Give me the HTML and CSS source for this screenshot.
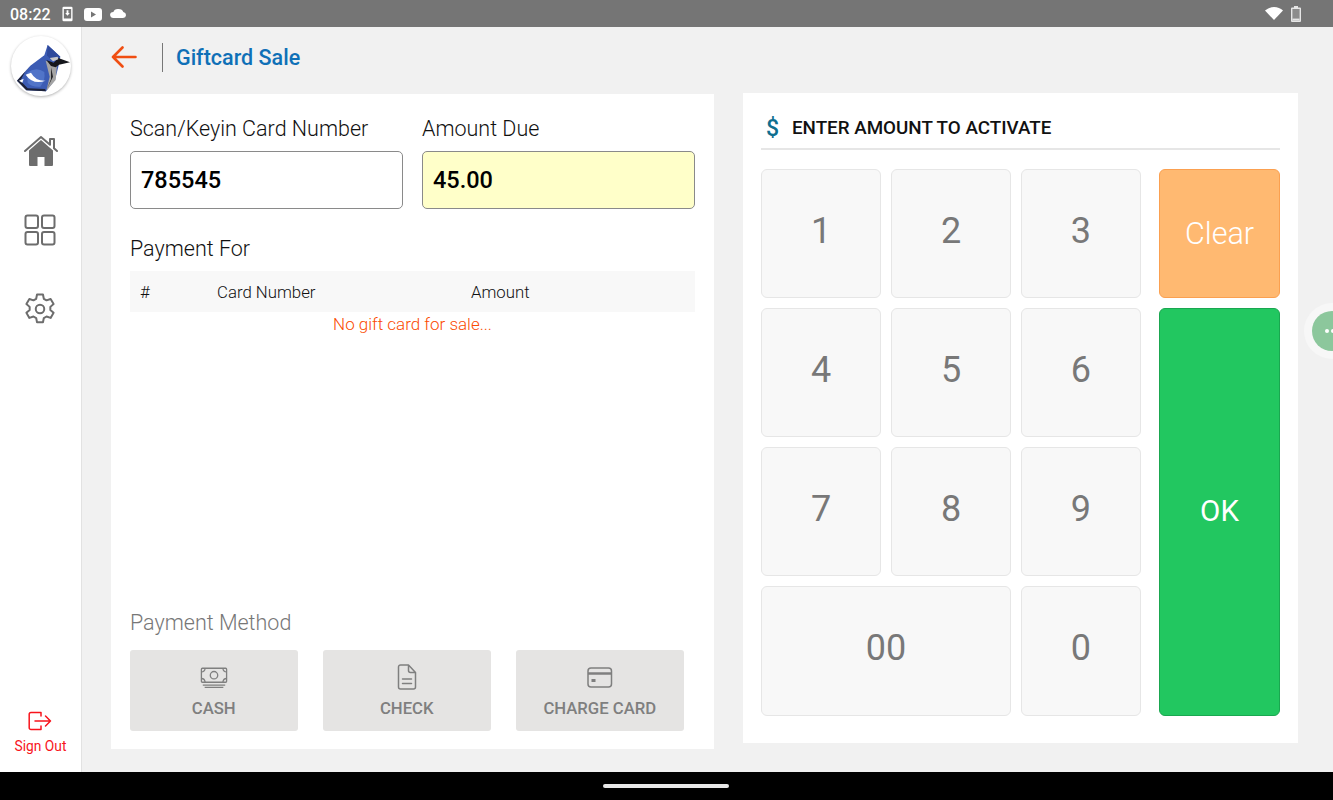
FILE: index.html
```html
<!DOCTYPE html>
<html lang="en">
<head>
<meta charset="utf-8">
<title>Giftcard Sale</title>
<link rel="stylesheet" href="styles.css">
</head>
<body>
<div class="statusbar">
  <span class="time">08:22</span>
  <svg class="st-ic" width="11" height="16" viewBox="0 0 12 16"><path fill-rule="evenodd" d="M2 0h8a1.500 1.500 0 0 1 1.500 1.500v13A1.500 1.500 0 0 1 10 16H2a1.500 1.500 0 0 1-1.500-1.500v-13A1.500 1.500 0 0 1 2 0zM2 2.500v10.500h8V2.500zM5 4h2v3h1.500L6 10 3.500 7H5z" fill="#fff"/></svg>
  <svg class="st-ic yt" width="18" height="13" viewBox="0 0 18 13"><path fill-rule="evenodd" d="M3 0h12a3 3 0 0 1 3 3v7a3 3 0 0 1-3 3H3a3 3 0 0 1-3-3V3a3 3 0 0 1 3-3zM7 3.500v6l5-3z" fill="#fff"/></svg>
  <svg class="st-ic cloud" width="17" height="9" viewBox="0 0 17 11" preserveAspectRatio="none"><path d="M4 11a3.600 3.600 0 0 1-.6-7.200A5 5 0 0 1 8.500 0a5 5 0 0 1 4.800 3.800A3.700 3.700 0 0 1 13 11z" fill="#fff"/></svg>
  <span class="st-space"></span>
  <svg class="st-ic wifi" width="18" height="13" viewBox="0 0 18 13"><path d="M9 13 0 3.500C2.500 1.300 5.500 0 9 0s6.500 1.300 9 3.500z" fill="#fff"/></svg>
  <svg class="st-ic batt" width="10" height="16" viewBox="0 0 10 16"><path d="M3 0h4v1.500h2a1 1 0 0 1 1 1V15a1 1 0 0 1-1 1H1a1 1 0 0 1-1-1V2.500a1 1 0 0 1 1-1h2z" fill="#e6e6e6"/><rect x="1.400" y="3" width="7.200" height="11.600" fill="#8c8c8c"/><rect x="1.400" y="12.600" width="7.200" height="2" fill="#e6e6e6"/></svg>
</div>

<div class="app">
  <nav class="sidebar">
    <div class="logo">
      <svg width="60" height="60" viewBox="30 18 180 180">
        <path d="M48 152 88 107 130 76 140 45 178 80 172 110 162 150 135 184 76 181z" fill="#3c5cb4"/>
        <path d="M48 152 88 107 72 126 58 152 80 175 132 177 135 184 76 181z" fill="#1d2238"/>
        <path d="M140 45 178 80 150 90 138 76z" fill="#2f4a9c"/>
        <path d="M78 128Q105 108 130 126 134 150 118 170 92 172 80 158z" fill="#5174c8"/>
        <path d="M74 134Q96 166 134 152 104 154 90 128z" fill="#fff"/>
        <path d="M54 152 68 146 64 158z" fill="#fff"/>
        <path d="M134 92 152 98 168 106 164 150 136 182 146 140z" fill="#a4a4a4"/>
        <path d="M136 90 158 98 172 84 207 97 174 104 164 112 150 108z" fill="#15161c"/>
        <path d="M146 84 170 80 172 88 156 94z" fill="#c8c8c8"/>
        <path d="M150 112 156 140 138 176 150 148z" fill="#26262a"/>
      </svg>
    </div>
    <a class="nav-ic home"><svg width="34" height="32" viewBox="0 0 34 32"><path d="M5 15.500 17 5l12 10.500V30a1 1 0 0 1-1 1h-7.500v-9h-7v9H6a1 1 0 0 1-1-1z" fill="#6d6d6d"/><path d="M1 16 17 2l9 7.800V4h4v9.300l3 2.700" fill="none" stroke="#6d6d6d" stroke-width="2" stroke-linejoin="round" stroke-linecap="round"/></svg></a>
    <a class="nav-ic grid-ic"><svg width="32" height="32" viewBox="0 0 32 32" fill="none" stroke="#6d6d6d" stroke-width="2"><rect x="1.500" y="1.500" width="12.500" height="12.500" rx="2"/><rect x="18" y="1.500" width="12.500" height="12.500" rx="2"/><rect x="1.500" y="18" width="12.500" height="12.500" rx="2"/><rect x="18" y="18" width="12.500" height="12.500" rx="2"/></svg></a>
    <a class="nav-ic gear"><svg width="34" height="34" viewBox="0 0 24 24" fill="none" stroke="#6d6d6d" stroke-width="1.400" stroke-linejoin="round"><circle cx="12" cy="12" r="3"/><path d="M9.900 1.800h4.200l.6 3 1.900 1.100 2.900-1 2.100 3.600-2.300 2 .0 2.200 2.300 2-2.100 3.600-2.900-1-1.900 1.100-.6 3H9.900l-.6-3-1.900-1.100-2.900 1-2.100-3.600 2.300-2v-2.200l-2.300-2 2.100-3.600 2.900 1 1.900-1.100z"/></svg></a>
    <a class="signout">
      <svg width="24" height="20" viewBox="0 0 24 20" fill="none" stroke="#f8141c" stroke-width="1.500" stroke-linecap="round" stroke-linejoin="round"><path d="M13 5V1.500H3A1.800 1.800 0 0 0 1.200 3.300v13.400A1.800 1.800 0 0 0 3 18.500h10V15"/><path d="M7 10h15.500M17.500 5l5 5-5 5"/></svg>
      <span>Sign Out</span>
    </a>
  </nav>

  <main class="main">
    <header class="topbar">
      <svg class="back" width="26" height="22" viewBox="0 0 26 22" fill="none" stroke="#f04e12" stroke-width="2.600" stroke-linecap="round" stroke-linejoin="round"><path d="M24.500 11H2M11.500 1.500 2 11l9.500 9.500"/></svg>
      <span class="divider"></span>
      <h1 class="title">Giftcard Sale</h1>
    </header>

    <div class="cards">
      <section class="card left">
        <div class="fields">
          <label class="field">
            <span class="lbl">Scan/Keyin Card Number</span>
            <span class="input">785545</span>
          </label>
          <label class="field">
            <span class="lbl">Amount Due</span>
            <span class="input due">45.00</span>
          </label>
        </div>
        <div class="lbl pay-for">Payment For</div>
        <div class="thead">
          <span class="c-num">#</span>
          <span class="c-card">Card Number</span>
          <span class="c-amt">Amount</span>
        </div>
        <div class="empty">No gift card for sale...</div>
        <div class="lbl method">Payment Method</div>
        <div class="methods">
          <button class="mbtn">
            <svg width="28" height="23" viewBox="0 0 30 24" fill="none" stroke="#7f7f7f" stroke-width="1.400"><rect x="1.500" y="1" width="27" height="15" rx="1"/><circle cx="15" cy="8.500" r="4"/><path d="M1.500 5Q5 5 5.500 1M28.500 5Q25 5 24.500 1M1.500 12Q5 12 5.500 16M28.500 12Q25 12 24.500 16M3 19h24M5 21.500h20" /></svg>
            <span>CASH</span>
          </button>
          <button class="mbtn">
            <svg width="20" height="26" viewBox="0 0 20 26" fill="none" stroke="#7f7f7f" stroke-width="1.500" stroke-linejoin="round" stroke-linecap="round"><path d="M11.500 1H3.500A2 2 0 0 0 1.500 3v20a2 2 0 0 0 2 2h13a2 2 0 0 0 2-2V8.500zM11.500 1v5.500a2 2 0 0 0 2 2h5M5.500 15h9M5.500 19.500h9"/></svg>
            <span>CHECK</span>
          </button>
          <button class="mbtn">
            <svg width="26" height="24" viewBox="0 0 26 24" fill="none" stroke="#7f7f7f" stroke-width="1.500"><rect x="1" y="2" width="23.500" height="19" rx="3"/><path d="M1 7.500h23.500" stroke-width="2.500"/><rect x="4.500" y="13" width="4" height="3" fill="#7f7f7f" stroke="none"/></svg>
            <span>CHARGE CARD</span>
          </button>
        </div>
      </section>

      <section class="card right">
        <div class="pad-head">
          <span class="dollar">$</span>
          <span class="pad-title">ENTER AMOUNT TO ACTIVATE</span>
        </div>
        <div class="pad">
          <button class="key">1</button>
          <button class="key">2</button>
          <button class="key">3</button>
          <button class="key clear">Clear</button>
          <button class="key">4</button>
          <button class="key">5</button>
          <button class="key">6</button>
          <button class="key ok">OK</button>
          <button class="key">7</button>
          <button class="key">8</button>
          <button class="key">9</button>
          <button class="key wide">00</button>
          <button class="key">0</button>
        </div>
      </section>
    </div>
  </main>
</div>

<div class="navbar"><span class="handle"></span></div>
<div class="bubble"><span class="dots"></span></div>
</body>
</html>
```

FILE: styles.css
```css
* { box-sizing: border-box; }
html, body { margin: 0; height: 800px; overflow: hidden; }
body {
  display: flex;
  flex-direction: column;
  font-family: Roboto, "Liberation Sans", sans-serif;
  background: #f1f1f1;
  color: #111;
}
.statusbar {
  height: 27px;
  background: #757575;
  display: flex;
  align-items: center;
  padding: 1px 32px 0 10px;
  color: #fff;
  flex: none;
}
.time { font-size: 16px; font-weight: 500; margin-right: 11px; }
.st-ic { display: block; flex: none; }
.yt { margin-left: 11px; }
.cloud { margin-left: 8px; margin-top: -1px; }
.st-space { flex: 1; }
.wifi { margin-top: -1px; }
.batt { margin-left: 8px; }

.app { flex: 1; display: flex; min-height: 0; }

.sidebar {
  width: 82px;
  flex: none;
  background: #fff;
  border-right: 1px solid #e2e2e2;
  display: flex;
  flex-direction: column;
  align-items: center;
  padding-top: 9px;
}
.logo {
  width: 60px;
  height: 60px;
  border-radius: 50%;
  background: #fff;
  box-shadow: 0 1px 3px rgba(0,0,0,.3);
  margin-bottom: 39px;
}
.logo svg { display: block; }
.nav-ic { display: block; height: 32px; margin-bottom: 47px; }
.nav-ic svg { display: block; }
.grid-ic, .gear { margin-right: 1px; }
.gear { margin-top: -1px; }
.signout {
  margin-top: auto;
  margin-bottom: 18px;
  display: flex;
  flex-direction: column;
  align-items: center;
  color: #f8141c;
  font-size: 13.800px;
  gap: 7px;
}

.main { flex: 1; padding-left: 29px; display: flex; flex-direction: column; min-width: 0; }
.topbar { height: 67px; flex: none; display: flex; align-items: center; padding-bottom: 7px; }
.back { display: block; margin-right: 25px; }
.divider { width: 1px; height: 29px; background: #777; margin-right: 13px; }
.title { margin: 0; font-size: 21.500px; font-weight: 500; color: #0f70b7; padding-top: 1px; }

.cards { display: flex; align-items: flex-start; gap: 29px; }
.card { background: #fff; }
.left {
  width: 603px;
  height: 655px;
  padding: 19px 19px 18px;
  display: flex;
  flex-direction: column;
}
.fields { display: flex; gap: 19px; }
.field { width: 273px; display: block; }
.lbl { display: block; height: 30px; padding-top: 1px; font-size: 21.500px; font-weight: 300; line-height: 30px; color: #111; }
.input {
  display: flex;
  align-items: center;
  height: 58px;
  margin-top: 8px;
  padding-left: 10px;
  border: 1px solid #8a8a8a;
  border-radius: 5px;
  font-size: 23.500px;
  font-weight: 500;
  color: #000;
  background: #fff;
}
.due { background: #ffffc9; }
.pay-for { margin-top: 24px; flex: none; }
.thead {
  height: 41px;
  margin-top: 8px;
  padding-top: 1px;
  background: #f8f8f8;
  display: flex;
  align-items: center;
  font-size: 16.800px;
  font-weight: 300;
}
.c-num { width: 87px; padding-left: 10px; }
.c-card { width: 254px; }
.empty {
  margin-top: 2px;
  text-align: center;
  font-size: 17px;
  font-weight: 300;
  line-height: 20px;
  color: #fb4c02;
}
.method { margin-top: auto; color: #777; flex: none; }
.methods { display: flex; gap: 25.500px; margin-top: 13px; }
.mbtn {
  width: 167.500px;
  height: 81px;
  border: 0;
  border-radius: 3px;
  background: #e5e4e3;
  padding: 0;
  font-family: inherit;
  color: #7f7f7f;
  font-size: 16.700px;
  font-weight: 500;
  display: flex;
  flex-direction: column;
  align-items: center;
  justify-content: flex-end;
  gap: 9px;
  padding-bottom: 13px;
}
.mbtn svg { display: block; }

.right { width: 555px; height: 650px; padding: 18px; margin-top: -1px; }
.pad-head {
  height: 39px;
  border-bottom: 2px solid #e6e6e6;
  display: flex;
  align-items: center;
  padding: 0 0 3px 5px;
}
.dollar { color: #0f6f8f; font-size: 23px; font-weight: 500; width: 26px; }
.pad-title { font-size: 18.800px; font-weight: 500; color: #111; }
.pad {
  margin-top: 19px;
  display: grid;
  grid-template-columns: 120px 120px 119.500px 121px;
  grid-template-rows: repeat(4, 129.300px);
  column-gap: 10px;
  row-gap: 9.800px;
}
.key {
  border: 1px solid #e6e6e6;
  border-radius: 6px;
  background: #f8f8f8;
  color: #787878;
  font-family: inherit;
  font-size: 36px;
  font-weight: 400;
  padding: 0 0 5px;
}
.clear, .ok { margin-left: 8.500px; width: 121px; color: #fff; padding: 0; }
.clear { background: #ffb971; border-color: #fba050; font-size: 30.500px; font-weight: 300; }
.ok { grid-column: 4; grid-row: 2 / span 3; background: #22c760; border-color: #1aa750; font-size: 29.500px; font-weight: 400; padding-bottom: 1px; }
.wide { grid-column: 1 / span 2; }

.navbar { height: 28px; flex: none; background: #000; display: flex; justify-content: center; align-items: flex-end; padding-bottom: 12px; }
.handle { width: 126px; height: 4px; border-radius: 2px; background: #e8e8e8; margin-right: 2px; }

.bubble {
  position: absolute;
  left: 1304px;
  top: 303px;
  width: 56px;
  height: 56px;
  border-radius: 50%;
  background: #f7f7f7;
  display: flex;
  align-items: center;
  justify-content: center;
}
.bubble .dots {
  position: relative;
  width: 40px;
  height: 40px;
  border-radius: 50%;
  background: #8cc79c;
}
.bubble .dots::before {
  content: "";
  position: absolute;
  left: 13px;
  top: 18px;
  width: 4px;
  height: 4px;
  border-radius: 50%;
  background: #fff;
  box-shadow: 6px 0 0 #fff;
}
```
